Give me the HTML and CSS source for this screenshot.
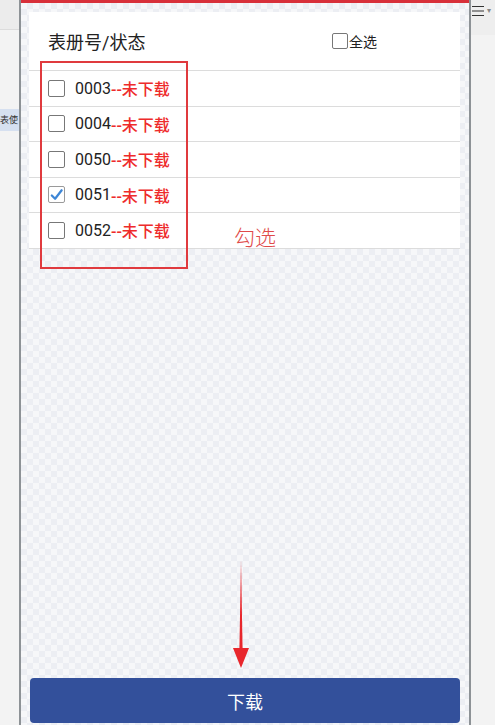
FILE: index.html
```html
<!DOCTYPE html>
<html lang="zh">
<head>
    <meta charset="UTF-8">
    <meta name="viewport" content="width=device-width, initial-scale=1.0">
    <title>表册下载</title>
    <link rel="stylesheet" href="styles.css">
</head>
<body>
    <div class="side side-left">
        <div class="side-toolbar"></div>
        <div class="side-tab">表使</div>
    </div>

    <div class="phone">
        <div class="top-bar"></div>
        <div class="screen">
            <div class="card">
                <div class="list-head">
                    <span class="head-title">表册号/状态</span>
                    <label class="check-all"><span class="box"></span>全选</label>
                </div>
                <div class="row"><span class="box"></span><span class="num">0003</span><span class="state">--未下载</span></div>
                <div class="row"><span class="box"></span><span class="num">0004</span><span class="state">--未下载</span></div>
                <div class="row"><span class="box"></span><span class="num">0050</span><span class="state">--未下载</span></div>
                <div class="row">
                    <span class="box checked">
                        <svg viewBox="0 0 16 16" width="16" height="16"><path d="M3 8.5 L6.5 12 L13.5 3" fill="none" stroke="#3d86d6" stroke-width="2.4" stroke-linecap="round" stroke-linejoin="round"/></svg>
                    </span><span class="num">0051</span><span class="state">--未下载</span>
                </div>
                <div class="row"><span class="box"></span><span class="num">0052</span><span class="state">--未下载</span></div>
            </div>

            <div class="spacer"></div>
            <button class="download-btn">下载</button>

            <!-- 标注 -->
            <div class="mark-box"></div>
            <div class="mark-text">勾选</div>
            <svg class="mark-arrow" width="20" height="110" viewBox="0 0 20 110">
                <path d="M10 0 L11.6 90 L8.4 90 Z" fill="#e8262c"/>
                <path d="M2 88 L18 88 L10 108 Z" fill="#e8262c"/>
            </svg>
        </div>
    </div>

    <div class="side side-right">
        <div class="menu-icon">
            <svg width="14" height="14" viewBox="0 0 14 14">
                <path d="M1 2.5 H13 M1 7 H13 M1 11.5 H13" stroke="#333" stroke-width="1.2"/>
            </svg>
            <span class="caret">▾</span>
        </div>
    </div>
</body>
</html>
```

FILE: styles.css
```css
* {
    box-sizing: border-box;
}
body {
    margin: 0;
    height: 725px;
    display: flex;
    font-family: Roboto, "Noto Sans CJK SC", sans-serif;
    background-color: #f4f4f4;
    overflow: hidden;
}
.side {
    background-color: #f3f3f3;
}
.side-left {
    width: 19px;
}
.side-toolbar {
    height: 30px;
    background-color: #ececec;
    border-bottom: 1px solid #dcdcdc;
}
.side-tab {
    margin-top: 79px;
    height: 22px;
    line-height: 22px;
    font-family: "Noto Sans CJK SC", sans-serif;
    font-size: 9px;
    color: #333;
    background-color: #d6e0f0;
    white-space: nowrap;
}
.side-right {
    width: 24px;
}
.menu-icon {
    height: 35px;
    display: flex;
    align-items: flex-start;
    padding-top: 4px;
    background-color: #eeeeee;
}
.menu-icon svg {
    display: block;
}
.caret {
    font-size: 8px;
    line-height: 14px;
    color: #888;
    margin-left: 2px;
}
.phone {
    width: 452px;
    display: flex;
    flex-direction: column;
    border-left: 2px solid #8d9296;
    border-right: 2px solid #8d9296;
}
.top-bar {
    height: 3px;
    background-color: #d8303a;
}
.screen {
    position: relative;
    flex: 1;
    display: flex;
    flex-direction: column;
    padding: 9px 9px 2px 8px;
    background-color: #f2f3f7;
    background-image: repeating-conic-gradient(#eceef3 0 25%, #f6f7f9 0 50%);
    background-size: 12px 12px;
}
.card {
    background-color: #fff;
}
.list-head {
    height: 59px;
    display: flex;
    align-items: center;
    padding-left: 19px;
    border-bottom: 1px solid #dcdcdc;
}
.head-title {
    font-size: 18px;
    color: #222;
    width: 284px;
}
.check-all {
    display: flex;
    align-items: center;
    font-size: 14px;
    color: #222;
}
.check-all .box {
    width: 16px;
    height: 16px;
    margin-right: 1px;
}
.row {
    height: 35.5px;
    display: flex;
    align-items: center;
    padding-left: 19px;
    border-bottom: 1px solid #dcdcdc;
    font-size: 16px;
}
.box {
    width: 17px;
    height: 17px;
    border: 1.5px solid #777;
    border-radius: 2px;
    background-color: #fff;
    display: inline-flex;
    align-items: center;
    justify-content: center;
}
.row .box {
    margin-right: 10px;
}
.box.checked {
    border-color: #9a9a9a;
}
.box svg {
    display: block;
}
.num {
    color: #222;
}
.state {
    color: #ee2b2b;
    font-weight: 500;
}
.spacer {
    flex: 1;
}
.download-btn {
    height: 45px;
    margin-left: 1px;
    border: none;
    border-radius: 4px;
    background-color: #33509b;
    color: #fff;
    font-family: "Noto Sans CJK SC", sans-serif;
    font-size: 18px;
    cursor: pointer;
}
.mark-box {
    position: absolute;
    left: 19px;
    top: 58px;
    width: 148px;
    height: 208px;
    border: 2px solid #e03a3e;
}
.mark-text {
    position: absolute;
    left: 213px;
    top: 218px;
    font-family: "Noto Sans CJK SC", sans-serif;
    font-weight: 300;
    font-size: 21px;
    color: #e04a4a;
}
.mark-arrow {
    position: absolute;
    left: 210px;
    top: 557px;
}
```
